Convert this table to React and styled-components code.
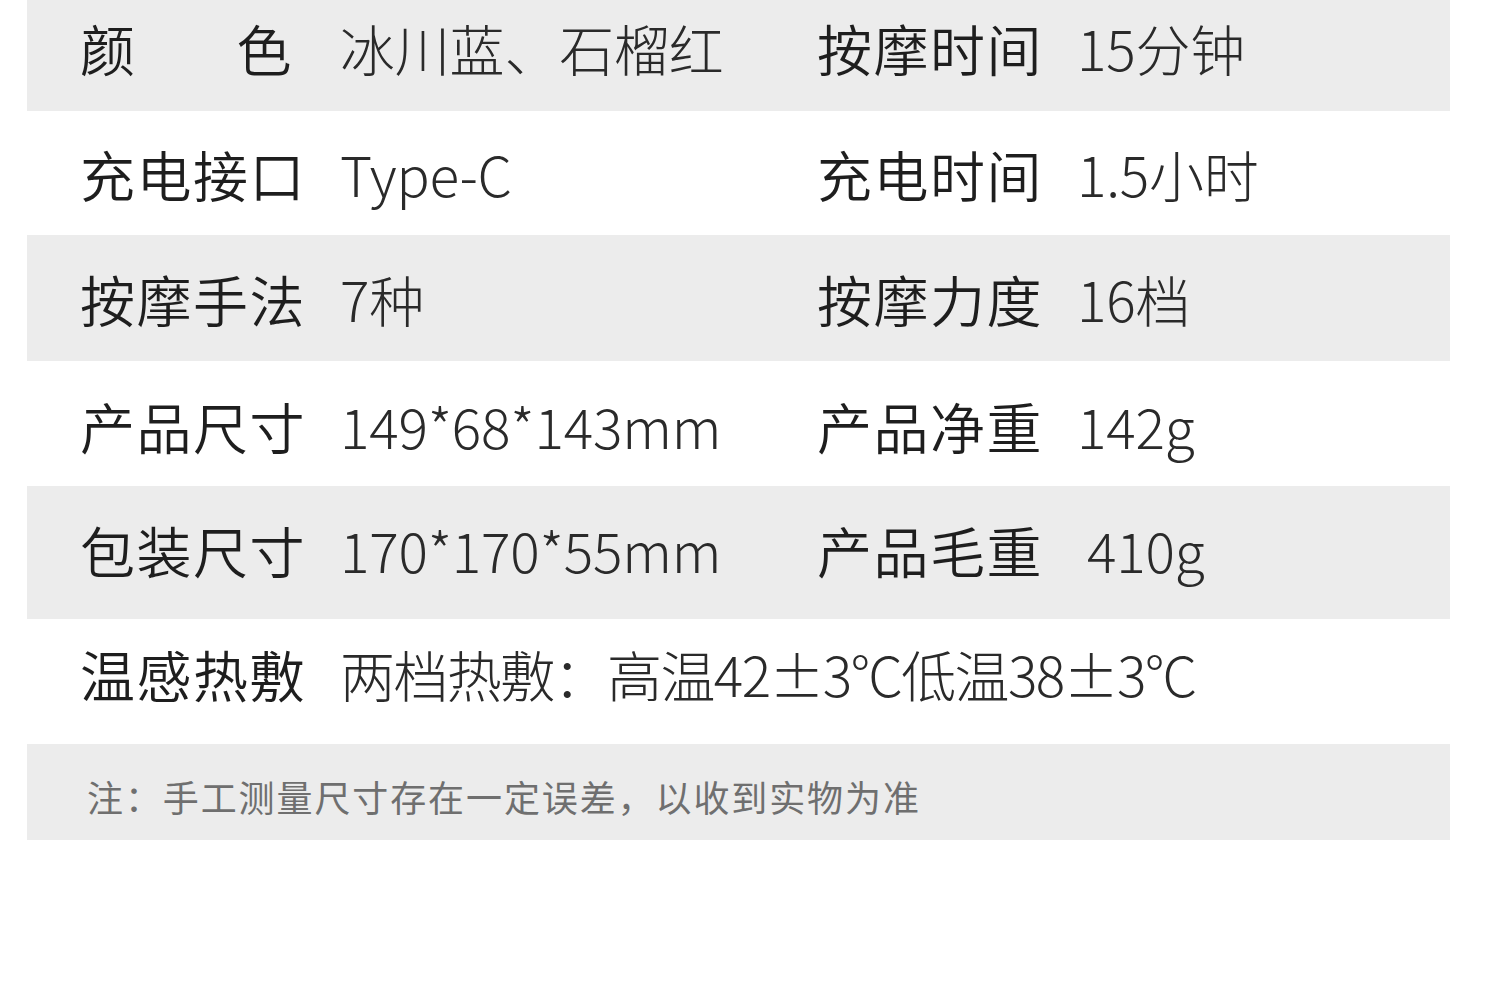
import React from "react";
import styled, { createGlobalStyle } from "styled-components";

const GlobalStyle = createGlobalStyle`
  html, body { margin: 0; padding: 0; background: #ffffff; }
  body { font-family: "Noto Sans CJK SC", "Noto Sans", sans-serif; }
`;

const Page = styled.div`
  width: 1500px;
  height: 996px;
  background: #ffffff;
  display: flex;
  flex-direction: column;
  padding: 0 50px 0 27px;
  box-sizing: border-box;
`;

const Row = styled.div`
  height: ${(p) => p.$h}px;
  background: ${(p) => (p.$shade ? "#ececec" : "#ffffff")};
  display: grid;
  grid-template-columns: 222px 439px 222px 1fr;
  column-gap: 38px;
  align-items: center;
  padding: ${(p) => p.$pt || 0}px 0 ${(p) => p.$pb || 0}px 53px;
  box-sizing: border-box;
  font-family: "Noto Sans CJK SC", sans-serif;
  font-size: 55px;
  line-height: 1;
`;

const Label = styled.div`
  color: #1e1e1e;
  font-weight: 350;
  white-space: nowrap;
  letter-spacing: 1.5px;
  width: ${(p) => (p.$justify ? "213px" : "auto")};
  text-align: ${(p) => (p.$justify ? "justify" : "left")};
  text-align-last: ${(p) => (p.$justify ? "justify" : "auto")};
`;

const Value = styled.div`
  color: #2a2a2a;
  font-weight: 300;
  white-space: nowrap;
  letter-spacing: ${(p) => (p.$tight ? "-1.6px" : "-0.2px")};
  padding-left: ${(p) => p.$indent || 0}px;
  grid-column: ${(p) => (p.$wide ? "2 / 5" : "auto")};
`;

const Note = styled.div`
  height: 96px;
  background: #ececec;
  display: flex;
  align-items: center;
  padding: 8px 0 0 60px;
  box-sizing: border-box;
  font-family: "Noto Sans CJK SC", sans-serif;
  font-size: 36px;
  letter-spacing: 1.9px;
  color: #6f6f6f;
  font-weight: 400;
  white-space: nowrap;
`;

const rows = [
  { h: 111, shade: true, pb: 16, a: ["颜色", "冰川蓝、石榴红"], b: ["按摩时间", "15分钟"], justify: true },
  { h: 124, a: ["充电接口", "Type-C"], b: ["充电时间", "1.5小时"] },
  { h: 126, shade: true, a: ["按摩手法", "7种"], b: ["按摩力度", "16档"] },
  { h: 125, pt: 4, a: ["产品尺寸", "149*68*143mm"], b: ["产品净重", "142g"] },
  { h: 133, shade: true, pb: 6, a: ["包装尺寸", "170*170*55mm"], b: ["产品毛重", "410g"], indent: 10 },
];

export default function App() {
  return (
    <>
      <GlobalStyle />
      <Page>
        {rows.map((r, i) => (
          <Row key={i} $h={r.h} $shade={r.shade} $pt={r.pt} $pb={r.pb}>
            <Label $justify={r.justify}>{r.a[0]}</Label>
            <Value>{r.a[1]}</Value>
            <Label>{r.b[0]}</Label>
            <Value $indent={r.indent}>{r.b[1]}</Value>
          </Row>
        ))}
        <Row $h={125} $pb={16}>
          <Label>温感热敷</Label>
          <Value $wide $tight>两档热敷：高温42±3°C低温38±3°C</Value>
        </Row>
        <Note>注：手工测量尺寸存在一定误差，以收到实物为准</Note>
      </Page>
    </>
  );
}
